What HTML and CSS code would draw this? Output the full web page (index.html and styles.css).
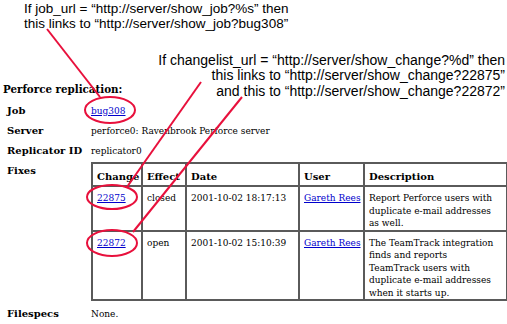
FILE: index.html
```html
<!DOCTYPE html>
<html>
<head>
<meta charset="utf-8">
<title>Perforce replication</title>
<link rel="stylesheet" href="styles.css">
</head>
<body>
<div class="canvas">
  <main class="page">
    <h2 class="title">Perforce replication:</h2>
    <div class="fields">
      <div class="label">Job</div>
      <div class="value"><a href="#">bug308</a></div>
      <div class="label">Server</div>
      <div class="value">perforce0: Ravenbrook Perforce server</div>
      <div class="label">Replicator ID</div>
      <div class="value">replicator0</div>
      <div class="label">Fixes</div>
      <div class="value">
        <table class="fixes">
          <colgroup>
            <col class="c-change"><col class="c-effect"><col class="c-date"><col class="c-user"><col class="c-desc">
          </colgroup>
          <thead>
            <tr><th>Change</th><th>Effect</th><th>Date</th><th>User</th><th>Description</th></tr>
          </thead>
          <tbody>
            <tr>
              <td><a href="#">22875</a></td>
              <td>closed</td>
              <td class="nowrap">2001-10-02 18:17:13</td>
              <td class="nowrap"><a href="#">Gareth Rees</a></td>
              <td class="desc">Report Perforce users with duplicate e-mail addresses as well.</td>
            </tr>
            <tr>
              <td><a href="#">22872</a></td>
              <td>open</td>
              <td class="nowrap">2001-10-02 15:10:39</td>
              <td class="nowrap"><a href="#">Gareth Rees</a></td>
              <td class="desc">The TeamTrack integration finds and reports TeamTrack users with duplicate e-mail addresses when it starts up.</td>
            </tr>
          </tbody>
        </table>
      </div>
      <div class="label">Filespecs</div>
      <div class="value">None.</div>
    </div>
  </main>

  <div class="note note-job">
    If job_url = “http://server/show_job?%s” then<br>
    this links to “http://server/show_job?bug308”
  </div>
  <div class="note note-change">
    <div>If changelist_url = “http://server/show_change?%d” then</div>
    <div>this links to “http://server/show_change?22875”</div>
    <div>and this to “http://server/show_change?22872”</div>
  </div>

  <svg class="marks" width="507" height="324" viewBox="0 0 507 324">
    <g fill="none" stroke="#e8103c" stroke-width="2">
      <line x1="47" y1="29" x2="100" y2="97"/>
      <line x1="201" y1="82" x2="127" y2="187"/>
      <line x1="242" y1="97" x2="133" y2="232"/>
      <ellipse cx="110" cy="110" rx="25" ry="13"/>
      <ellipse cx="112" cy="197" rx="25" ry="12"/>
      <ellipse cx="112" cy="243" rx="25" ry="13"/>
    </g>
  </svg>
</div>
</body>
</html>
```

FILE: styles.css
```css
html, body {
  margin: 0;
  padding: 0;
  background: #ffffff;
}

.canvas {
  position: relative;
  width: 507px;
  height: 324px;
  overflow: hidden;
  font-family: "DejaVu Serif", "Liberation Serif", serif;
  font-size: 9px;
  color: #000;
}

.page {
  padding: 82px 0 0 3px;
}

.title {
  margin: 0 0 8px 0;
  font-family: "DejaVu Serif", serif;
  font-weight: bold;
  font-size: 10.3px;
  line-height: 14px;
}

.fields {
  display: grid;
  grid-template-columns: 84px 1fr;
  row-gap: 6px;
  padding-left: 4px;
}

.label {
  font-family: "DejaVu Serif", serif;
  font-weight: bold;
  font-size: 10px;
  line-height: 14px;
}

.value {
  line-height: 14px;
}

a {
  color: #0000cc;
  text-decoration: underline;
}

.fixes {
  border-collapse: collapse;
  table-layout: fixed;
  width: 415px;
  margin-top: -2px;
}

.c-change { width: 50px; }
.c-effect { width: 44px; }
.c-date { width: 113px; }
.c-user { width: 65px; }
.c-desc { width: 143px; }

.fixes th,
.fixes td {
  border: 2px solid #5a5a5a;
  vertical-align: top;
  text-align: left;
  padding: 5px 3px 0 4px;
  line-height: 12.5px;
}

.fixes td.nowrap {
  white-space: nowrap;
  overflow: visible;
}

.fixes td.desc {
  padding-right: 7px;
}

.fixes th {
  font-family: "DejaVu Serif", serif;
  font-weight: bold;
  font-size: 10px;
  height: 23px;
  box-sizing: border-box;
  padding-top: 7px;
  padding-bottom: 0;
  white-space: nowrap;
  overflow: hidden;
}

.note {
  position: absolute;
  font-family: "Liberation Sans", Arial, sans-serif;
  line-height: 15.3px;
  color: #000;
  white-space: nowrap;
}

.note-job {
  left: 24px;
  top: 1px;
  font-size: 13.5px;
}

.note-change {
  right: 2px;
  top: 53px;
  font-size: 14px;
  text-align: right;
}

.marks {
  position: absolute;
  left: 0;
  top: 0;
  pointer-events: none;
}
```
